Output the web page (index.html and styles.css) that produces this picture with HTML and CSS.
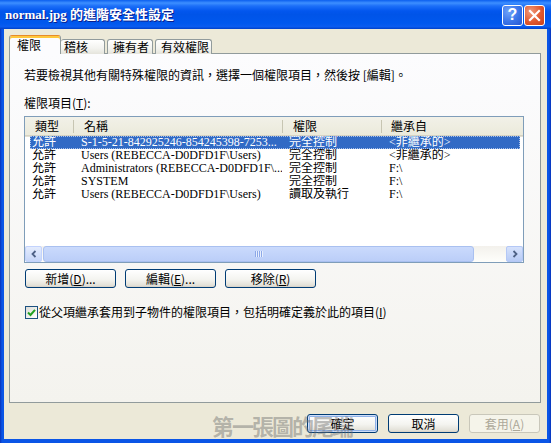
FILE: index.html
```html
<!DOCTYPE html>
<html lang="zh-Hant">
<head>
<meta charset="utf-8">
<title>normal.jpg 的進階安全性設定</title>
<link rel="stylesheet" href="styles.css">
</head>
<body>
<div class="window">
  <div class="titlebar">
    <span class="title">normal.jpg 的進階安全性設定</span>
    <span class="tb help">?</span>
    <span class="tb close">
      <svg width="13" height="13" viewBox="0 0 13 13"><path d="M2 2 L11 11 M11 2 L2 11" stroke="#fff" stroke-width="2.2" stroke-linecap="square"/></svg>
    </span>
  </div>
  <div class="client">
    <div class="tabs">
      <div class="tab sel">權限</div>
      <div class="tab t2">稽核</div>
      <div class="tab t3">擁有者</div>
      <div class="tab t4">有效權限</div>
    </div>
    <div class="panel">
      <p class="intro">若要檢視其他有關特殊權限的資訊，選擇一個權限項目，然後按 [編輯]。</p>
      <p class="label">權限項目(<u>T</u>):</p>
      <div class="list">
        <div class="lhead">
          <div class="hc h1">類型</div>
          <div class="hc h2">名稱</div>
          <div class="hc h3">權限</div>
          <div class="hc h4">繼承自</div>
        </div>
        <div class="rows">
          <div class="row selected"><span class="c c1">允許</span><span class="c c2">S-1-5-21-842925246-854245398-7253...</span><span class="c c3">完全控制</span><span class="c c4">&lt;非繼承的&gt;</span></div>
          <div class="row"><span class="c c1">允許</span><span class="c c2">Users (REBECCA-D0DFD1F\Users)</span><span class="c c3">完全控制</span><span class="c c4">&lt;非繼承的&gt;</span></div>
          <div class="row"><span class="c c1">允許</span><span class="c c2">Administrators (REBECCA-D0DFD1F\...</span><span class="c c3">完全控制</span><span class="c c4">F:\</span></div>
          <div class="row"><span class="c c1">允許</span><span class="c c2">SYSTEM</span><span class="c c3">完全控制</span><span class="c c4">F:\</span></div>
          <div class="row"><span class="c c1">允許</span><span class="c c2">Users (REBECCA-D0DFD1F\Users)</span><span class="c c3">讀取及執行</span><span class="c c4">F:\</span></div>
        </div>
        <div class="hscroll">
          <span class="sbtn"><svg width="8" height="8" viewBox="0 0 8 8"><path d="M5.5 1 L2.5 4 L5.5 7" fill="none" stroke="#4D6185" stroke-width="1.8"/></svg></span>
          <span class="thumb"><span class="grip"></span></span>
          <span class="track"></span>
          <span class="sbtn rb"><svg width="8" height="8" viewBox="0 0 8 8"><path d="M2.5 1 L5.5 4 L2.5 7" fill="none" stroke="#4D6185" stroke-width="1.8"/></svg></span>
        </div>
      </div>
      <div class="btnrow">
        <button class="btn wide">新增(<u>D</u>)...</button>
        <button class="btn wide">編輯(<u>E</u>)...</button>
        <button class="btn wide">移除(<u>R</u>)</button>
      </div>
      <label class="check">
        <span class="box"><svg width="9" height="9" viewBox="0 0 9 9"><path d="M1 4.5 L3.5 7 L8 1.8" fill="none" stroke="#21A121" stroke-width="2"/></svg></span>
        <span class="ctext">從父項繼承套用到子物件的權限項目，包括明確定義於此的項目(<u>I</u>)</span>
      </label>
    </div>
    <div class="footer">
      <button class="btn fbtn default">確定</button>
      <button class="btn fbtn">取消</button>
      <button class="btn fbtn disabled">套用(<u>A</u>)</button>
    </div>
    <div class="watermark">第一張圖的尾端</div>
  </div>
</div>
</body>
</html>
```

FILE: styles.css
```css
* { box-sizing: border-box; }

body {
  margin: 0;
  width: 551px;
  height: 443px;
  overflow: hidden;
  font-family: "Noto Sans CJK TC", sans-serif;
  font-size: 12px;
  color: #000;
}

.window {
  width: 551px;
  height: 443px;
  display: flex;
  flex-direction: column;
  background: linear-gradient(90deg, #0831B8 0, #0A55E6 2px, #0A55E6 calc(100% - 2px), #0831B8 100%);
}

.titlebar {
  height: 29px;
  display: flex;
  align-items: center;
  padding: 1px 6px 0 5px;
  background: linear-gradient(#0B5FEF 0, #3D8FFF 3px, #1C6FF8 6px, #0256EE 11px, #0054E8 50%, #0058EE 80%, #0A5CF0 92%, #003FC8 100%);
}

.title {
  flex: 1;
  color: #fff;
  font: bold 13px "Liberation Serif", "Noto Sans CJK TC", serif;
  text-shadow: 1px 1px #0A1E8C;
  white-space: nowrap;
  line-height: 16px;
}

.tb {
  width: 21px;
  height: 21px;
  border: 1px solid #fff;
  border-radius: 3px;
  display: flex;
  align-items: center;
  justify-content: center;
  color: #fff;
  font: bold 16px "Liberation Sans", sans-serif;
}

.help {
  margin-right: 1px;
  background: radial-gradient(circle at 30% 30%, #6FA3FA 0, #3A74E8 55%, #2657D2 100%);
}

.close {
  background: radial-gradient(circle at 30% 30%, #F09A7C 0, #E0582E 55%, #C8401A 100%);
}

.client {
  flex: 1;
  margin: 0 4px 4px;
  background: #ECE9D8;
  padding: 6px 0 0 5px;
  position: relative;
}

.tabs {
  display: flex;
  align-items: flex-end;
  height: 19px;
  position: relative;
  z-index: 1;
}

.tab {
  height: 15px;
  border: 1px solid #919B9C;
  border-bottom: none;
  border-radius: 3px 3px 0 0;
  background: linear-gradient(#FFFFFF, #F3F3EF 60%, #E5E4DC);
  line-height: 14px;
  white-space: nowrap;
}

.tab.sel {
  width: 52px;
  height: 19px;
  padding: 2px 0 0 7px;
  background: #FCFCFE;
  border-top: 1px solid #E68B2C;
  box-shadow: inset 0 2px #FFC83C;
  line-height: 14px;
}

.t2 { width: 44px; padding-left: 3px; border-left: none; }
.t3 { width: 46px; margin-left: 2px; padding-left: 5px; }
.t4 { width: 57px; margin-left: 2px; padding-left: 5px; }

.panel {
  margin-top: -1px;
  width: 532px;
  height: 350px;
  border: 1px solid #919B9C;
  border-right-color: #8C9596;
  background: linear-gradient(#FCFCFE, #F4F3EE);
  padding: 14px 0 0 14px;
}

.intro, .label {
  margin: 0;
  line-height: 14px;
  white-space: nowrap;
}

.label { margin-top: 14px; }

.list {
  margin-top: 6px;
  width: 500px;
  height: 147px;
  border: 1px solid #7F9DB9;
  background: #fff;
  display: flex;
  flex-direction: column;
}

.lhead {
  height: 19px;
  display: flex;
  background: linear-gradient(#F2F1E8, #EBEADB);
  border-bottom: 1px solid #D6D2C2;
  box-shadow: 0 1px #E2DFD2;
}

.hc {
  line-height: 18px;
  white-space: nowrap;
}

.h1 { width: 48px; padding-left: 10px; }
.h2, .h3, .h4 {
  padding-left: 11px;
  background: linear-gradient(#C7C5B2, #C7C5B2) no-repeat 0 50% / 1px 13px;
}
.h2 { width: 209px; }
.h3 { width: 99px; }
.h4 { flex: 1; padding-left: 10px; }

.rows {
  flex: 1;
  padding-top: 0;
  font-family: "Liberation Serif", "Noto Sans CJK TC", serif;
}

.row {
  display: flex;
  height: 13px;
  line-height: 13px;
  margin: 0 3px 0 5px;
  white-space: nowrap;
}

.row.selected {
  background: #316AC5;
  color: #fff;
  outline: 1px dotted #A9C1EA;
  outline-offset: -1px;
}

.c { overflow: hidden; }
.c1 { width: 43px; padding-left: 2px; }
.c2 { width: 209px; padding-left: 8px; }
.c3 { width: 99px; padding-left: 7px; }
.c4 { flex: 1; padding-left: 8px; }

.hscroll {
  height: 16px;
  display: flex;
  background: linear-gradient(#F3F1EC, #FEFEFB);
}

.sbtn {
  width: 17px;
  height: 16px;
  border: 1px solid #C3D3FD;
  border-radius: 2px;
  background: linear-gradient(#E4ECFD, #C6D6F8);
  display: flex;
  align-items: center;
  justify-content: center;
}

.sbtn.rb {
  background: linear-gradient(#D6E2FC, #B7CBF5);
  border-color: #B4C8F6;
}

.thumb {
  width: 431px;
  margin-left: 1px;
  border: 1px solid #A9C0F0;
  border-radius: 3px;
  background: linear-gradient(#CADAFC, #BBCEF8);
  display: flex;
  align-items: center;
  justify-content: center;
}

.grip {
  width: 8px;
  height: 6px;
  background: repeating-linear-gradient(90deg, #8CA8E8 0 1px, #E8EFFD 1px 2px);
}

.track { flex: 1; }

.btnrow {
  display: flex;
  gap: 9px;
  margin: 6px 0 0 1px;
}

.btn {
  height: 19px;
  padding: 0;
  border: 1px solid #003C74;
  border-radius: 3px;
  background: linear-gradient(#FFFFFF, #F4F4F0 55%, #E3E1D8 90%, #D6D0C5);
  font: 12px "Noto Sans CJK TC", sans-serif;
  color: #000;
  line-height: 17px;
}

.wide { width: 91px; }

.check {
  display: flex;
  align-items: center;
  margin: 17px 0 0 1px;
  line-height: 14px;
}

.box {
  width: 13px;
  height: 13px;
  border: 1px solid #1C5180;
  background: linear-gradient(135deg, #DCDCD7, #FFFFFF);
  display: flex;
  align-items: center;
  justify-content: center;
  margin-right: 1px;
}

.ctext { white-space: nowrap; }

.footer {
  display: flex;
  justify-content: flex-end;
  gap: 10px;
  margin-top: 11px;
  padding-right: 7px;
}

.fbtn { width: 71px; }

.default {
  box-shadow: inset 0 0 0 1px #CEDDF8, inset 0 0 0 2px #90B2E8;
}

.disabled {
  border-color: #C9C7BA;
  background: #F5F4EA;
  color: #ACA899;
}

.watermark {
  position: absolute;
  left: 208px;
  top: 385px;
  font: bold 22px "Noto Sans CJK TC", sans-serif;
  letter-spacing: -2px;
  line-height: 22px;
  color: rgba(110, 110, 110, 0.45);
  white-space: nowrap;
  pointer-events: none;
}
```
